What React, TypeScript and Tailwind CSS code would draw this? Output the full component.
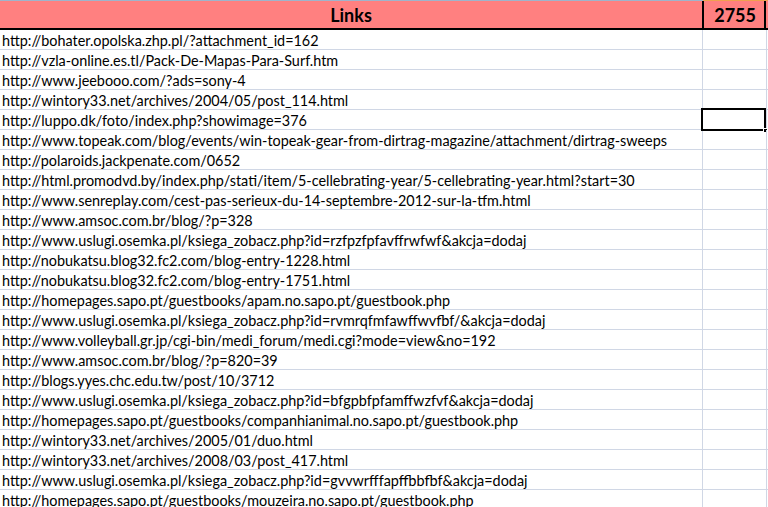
const links = [
  "http://bohater.opolska.zhp.pl/?attachment_id=162",
  "http://vzla-online.es.tl/Pack-De-Mapas-Para-Surf.htm",
  "http://www.jeebooo.com/?ads=sony-4",
  "http://wintory33.net/archives/2004/05/post_114.html",
  "http://luppo.dk/foto/index.php?showimage=376",
  "http://www.topeak.com/blog/events/win-topeak-gear-from-dirtrag-magazine/attachment/dirtrag-sweeps",
  "http://polaroids.jackpenate.com/0652",
  "http://html.promodvd.by/index.php/stati/item/5-cellebrating-year/5-cellebrating-year.html?start=30",
  "http://www.senreplay.com/cest-pas-serieux-du-14-septembre-2012-sur-la-tfm.html",
  "http://www.amsoc.com.br/blog/?p=328",
  "http://www.uslugi.osemka.pl/ksiega_zobacz.php?id=rzfpzfpfavffrwfwf&akcja=dodaj",
  "http://nobukatsu.blog32.fc2.com/blog-entry-1228.html",
  "http://nobukatsu.blog32.fc2.com/blog-entry-1751.html",
  "http://homepages.sapo.pt/guestbooks/apam.no.sapo.pt/guestbook.php",
  "http://www.uslugi.osemka.pl/ksiega_zobacz.php?id=rvmrqfmfawffwvfbf/&akcja=dodaj",
  "http://www.volleyball.gr.jp/cgi-bin/medi_forum/medi.cgi?mode=view&no=192",
  "http://www.amsoc.com.br/blog/?p=820=39",
  "http://blogs.yyes.chc.edu.tw/post/10/3712",
  "http://www.uslugi.osemka.pl/ksiega_zobacz.php?id=bfgpbfpfamffwzfvf&akcja=dodaj",
  "http://homepages.sapo.pt/guestbooks/companhianimal.no.sapo.pt/guestbook.php",
  "http://wintory33.net/archives/2005/01/duo.html",
  "http://wintory33.net/archives/2008/03/post_417.html",
  "http://www.uslugi.osemka.pl/ksiega_zobacz.php?id=gvvwrfffapffbbfbf&akcja=dodaj",
  "http://homepages.sapo.pt/guestbooks/mouzeira.no.sapo.pt/guestbook.php",
];

export default function App() {
  return (
    <div
      className="w-[768px] h-[507px] overflow-hidden bg-white text-black"
      style={{ fontFamily: "Lato, 'Open Sans', sans-serif" }}
    >
      <div className="flex h-px">
        <div className="w-[703px] bg-[#9fb4cc]" />
        <div className="flex-1 bg-[#f0a050]" />
      </div>
      <div className="flex h-[29px] border-b-2 border-black bg-[#ff8080]">
        <div className="w-[704px] border-r-2 border-black flex items-center justify-center font-bold text-[18px] leading-none pt-px">
          Links
        </div>
        <div className="w-[62px] border-r-2 border-black flex items-center justify-end pr-[8px] font-bold text-[18px] leading-none pt-px">
          2755
        </div>
      </div>
      {links.map((l, i) => (
        <div key={i} className="flex h-[20px] border-b border-[#d0d7e5]">
          <div className="w-[703px] border-r border-[#d0d7e5] pl-[2px] pt-px text-[14.4px] leading-[19px] whitespace-nowrap overflow-hidden">
            {l}
          </div>
          <div className="w-[64px] border-r border-[#d0d7e5] relative">
            {i === 4 && (
              <div className="absolute left-[-2px] top-[-2px] w-[65px] h-[23px] border-2 border-black">
                <div className="absolute right-[-4px] bottom-[-4px] w-[5px] h-[5px] bg-black border border-white" />
              </div>
            )}
          </div>
        </div>
      ))}
    </div>
  );
}
